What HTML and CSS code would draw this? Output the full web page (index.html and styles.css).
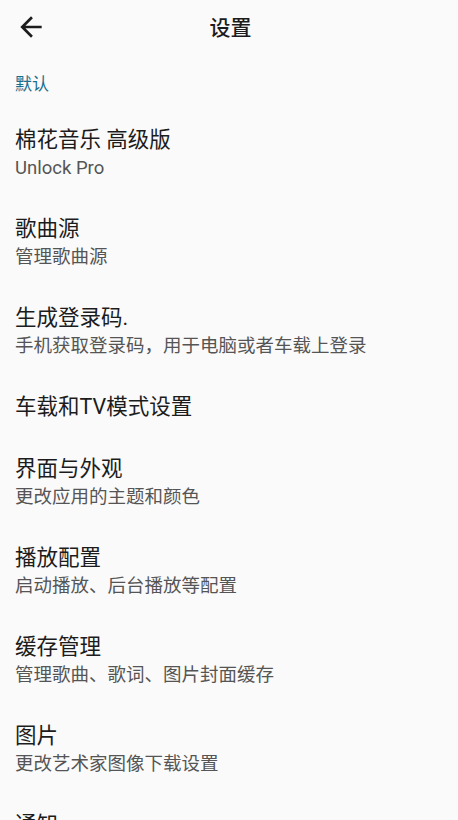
FILE: index.html
```html
<!DOCTYPE html>
<html lang="zh-CN">
<head>
<meta charset="utf-8">
<title>设置</title>
<link rel="stylesheet" href="styles.css">
</head>
<body>
<div class="app">
  <header class="topbar">
    <div class="topbar-left">
      <svg class="back-icon" viewBox="0 0 24 24" aria-hidden="true">
        <path d="M20 11H7.83l5.59-5.59L12 4l-8 8 8 8 1.41-1.41L7.83 13H20v-2z"/>
      </svg>
    </div>
    <div class="topbar-title">设置</div>
    <div class="topbar-right"></div>
  </header>
  <div class="category">默认</div>
  <ul class="pref-list">
    <li class="pref"><div class="pref-title">棉花音乐 高级版</div><div class="pref-summary">Unlock Pro</div></li>
    <li class="pref"><div class="pref-title">歌曲源</div><div class="pref-summary">管理歌曲源</div></li>
    <li class="pref"><div class="pref-title">生成登录码.</div><div class="pref-summary">手机获取登录码，用于电脑或者车载上登录</div></li>
    <li class="pref"><div class="pref-title">车载和TV模式设置</div></li>
    <li class="pref"><div class="pref-title">界面与外观</div><div class="pref-summary">更改应用的主题和颜色</div></li>
    <li class="pref"><div class="pref-title">播放配置</div><div class="pref-summary">启动播放、后台播放等配置</div></li>
    <li class="pref"><div class="pref-title">缓存管理</div><div class="pref-summary">管理歌曲、歌词、图片封面缓存</div></li>
    <li class="pref"><div class="pref-title">图片</div><div class="pref-summary">更改艺术家图像下载设置</div></li>
    <li class="pref"><div class="pref-title">通知</div><div class="pref-summary">通知设置</div></li>
  </ul>
</div>
</body>
</html>
```
FILE: styles.css
```css
html, body {
  margin: 0;
  padding: 0;
  background: #fafafa;
}
body {
  font-family: Roboto, "Noto Sans CJK SC", sans-serif;
  color: #1c1c1c;
  overflow: hidden;
}
.app {
  width: 458px;
  min-height: 820px;
}
.topbar {
  height: 54px;
  display: grid;
  grid-template-columns: 1fr auto 1fr;
  align-items: center;
}
.topbar-left {
  padding-left: 15px;
  display: flex;
  align-items: center;
}
.back-icon {
  width: 32px;
  height: 32px;
  fill: #1c1c1c;
}
.topbar-title {
  font-size: 21px;
  font-weight: 500;
  line-height: 28px;
  padding-top: 1px;
  padding-left: 3px;
}
.category {
  padding: 18px 15px 12px;
  font-size: 17px;
  line-height: 24px;
  color: #18708f;
}
.pref-list {
  list-style: none;
  margin: 0;
  padding: 0;
}
.pref {
  padding: 15.5px 15px;
}
.pref-title {
  font-size: 21.5px;
  line-height: 31px;
  color: #1c1c1c;
}
.pref-summary {
  font-size: 18.5px;
  line-height: 27px;
  color: #555555;
}
```
